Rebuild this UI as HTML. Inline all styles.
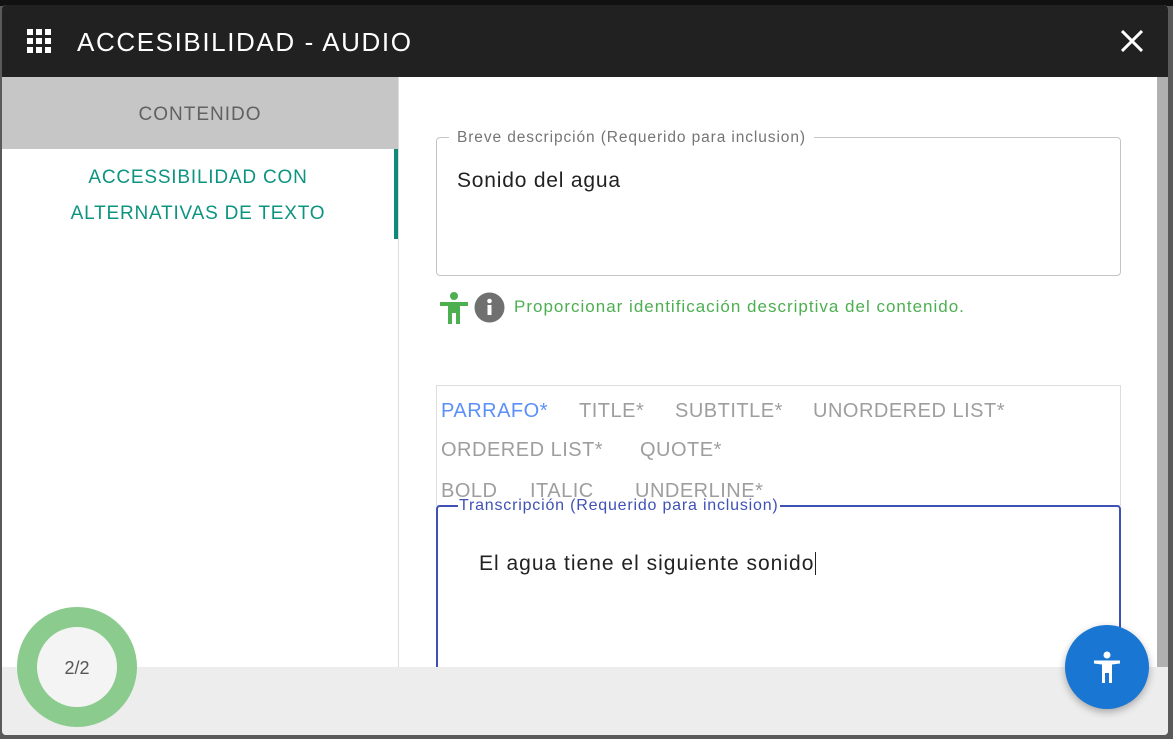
<!DOCTYPE html>
<html><head><meta charset="utf-8"><style>
*{margin:0;padding:0;box-sizing:border-box}
body{width:1173px;height:739px;background:#5a5a5a;font-family:"Liberation Sans",sans-serif;position:relative;overflow:hidden}
.top{position:absolute;left:0;top:0;width:1173px;height:6px;background:#111}
.modal{position:absolute;left:2px;top:5px;width:1166px;height:730px;background:#fff;border-radius:4px;overflow:hidden}
.hdr{position:absolute;left:0;top:0;width:1166px;height:72px;background:#212121}
.hdr .t{position:absolute;left:75px;top:22px;color:#fff;font-size:26px;letter-spacing:1.6px}
.side{position:absolute;left:0;top:72px;width:397px;height:590px;border-right:1px solid #ddd}
.tab{height:72px;background:#c6c6c6;color:#616161;font-size:19px;text-align:center;line-height:76px;letter-spacing:1px}
.act{position:absolute;left:0;top:144px;width:396px;height:90px;border-right:4px solid #0d8a78;color:#0d9480;font-size:19px;text-align:center;line-height:36px;padding-top:11px;letter-spacing:.8px}
.scroll{position:absolute;left:1155px;top:72px;width:11px;height:590px;background:#b0b0b0}
.foot{position:absolute;left:0;top:662px;width:1166px;height:68px;background:#ededed}
.f1{position:absolute;left:434px;top:132px;width:685px;height:139px;border:1px solid #c4c4c4;border-radius:4px}
.f1 .l{position:absolute;left:12px;top:-9px;background:#fff;padding:0 8px;color:#757575;font-size:15.5px;letter-spacing:.9px}
.f1 .v{position:absolute;left:20px;top:31px;font-size:21px;color:#222;letter-spacing:.8px}
.hint{position:absolute;left:512px;top:292px;color:#4caf50;font-size:17px;letter-spacing:1px}
.tb{position:absolute;left:434px;top:380px;width:685px;height:121px;border:1px solid #ddd;overflow:hidden;color:#9e9e9e;font-size:20px;letter-spacing:.5px}
.tb span{position:absolute}
.f2{position:absolute;left:434px;top:500px;width:685px;height:200px;border:2px solid #3f51b5;border-radius:4px;background:#fff}
.f2 .l{position:absolute;left:20px;top:-10px;background:#fff;padding:0 1px;color:#3f51b5;font-size:16px;letter-spacing:.8px}
.f2 .v{position:absolute;left:41px;top:45px;font-size:21px;color:#222;letter-spacing:1px}
.ring{position:absolute;left:17px;top:607px;width:120px;height:120px;border-radius:50%;border:20px solid #8bcc8e;background:#f4f4f4;text-align:center;line-height:82px;color:#555;font-size:18px}
.fab{position:absolute;left:1065px;top:625px;width:84px;height:84px;border-radius:50%;background:#1976d2;box-shadow:0 3px 8px rgba(0,0,0,.3)}
</style></head><body>
<div class="top"></div>
<div class="modal">
<div class="hdr">
<svg style="position:absolute;left:25px;top:24px" width="24" height="24" viewBox="0 0 24 24" fill="#fff"><rect x="0" y="0" width="6" height="6"/><rect x="9" y="0" width="6" height="6"/><rect x="18" y="0" width="6" height="6"/><rect x="0" y="9" width="6" height="6"/><rect x="9" y="9" width="6" height="6"/><rect x="18" y="9" width="6" height="6"/><rect x="0" y="18" width="6" height="6"/><rect x="9" y="18" width="6" height="6"/><rect x="18" y="18" width="6" height="6"/></svg>
<div class="t">ACCESIBILIDAD - AUDIO</div>
<svg style="position:absolute;left:1119px;top:25px" width="22" height="22" viewBox="0 0 22 22" stroke="#fff" stroke-width="3"><path d="M1 1L21 21M21 1L1 21"/></svg>
</div>
<div class="side"><div class="tab">CONTENIDO</div></div>
<div class="act">ACCESSIBILIDAD CON<br>ALTERNATIVAS DE TEXTO</div>
<div class="scroll"></div>
<div class="f1"><div class="l">Breve descripción (Requerido para inclusion)</div><div class="v">Sonido del agua</div></div>
<svg style="position:absolute;left:437px;top:287px" width="30" height="32" viewBox="0 0 30 32" fill="#4caf50"><circle cx="15" cy="4" r="4"/><rect x="1" y="10" width="28" height="4"/><rect x="9" y="10" width="12" height="11"/><rect x="9" y="20" width="4" height="12"/><rect x="17" y="20" width="4" height="12"/></svg>
<svg style="position:absolute;left:472px;top:287px" width="31" height="31" viewBox="0 0 31 31"><circle cx="15.5" cy="15.5" r="15" fill="#707070"/><rect x="13.5" y="13" width="4" height="10" fill="#fff"/><circle cx="15.5" cy="9" r="2.3" fill="#fff"/></svg>
<div class="hint">Proporcionar identificación descriptiva del contenido.</div>
<div class="tb">
<span style="left:4px;top:14px;color:#5b8ff9">PARRAFO*</span>
<span style="left:142px;top:14px">TITLE*</span>
<span style="left:238px;top:14px">SUBTITLE*</span>
<span style="left:376px;top:14px">UNORDERED LIST*</span>
<span style="left:4px;top:53px">ORDERED LIST*</span>
<span style="left:203px;top:53px">QUOTE*</span>
<span style="left:4px;top:94px">BOLD</span>
<span style="left:93px;top:94px">ITALIC</span>
<span style="left:198px;top:94px">UNDERLINE*</span>
</div>
<div class="f2"><div class="l">Transcripción (Requerido para inclusion)</div><div class="v">El agua tiene el siguiente sonido<span style="border-left:1px solid #222;margin-left:1px"></span></div></div>
<div class="foot"></div>
</div>
<div class="ring">2/2</div>
<div class="fab"><svg style="position:absolute;left:28px;top:26px" width="28" height="32" viewBox="0 0 28 32" fill="#fff"><circle cx="14" cy="4" r="3.5"/><path d="M1 9.5L27 9.5L27 12.5L19 13.5L19 32L16 32L16 22L12 22L12 32L9 32L9 13.5L1 12.5Z"/></svg></div>
</body></html>
